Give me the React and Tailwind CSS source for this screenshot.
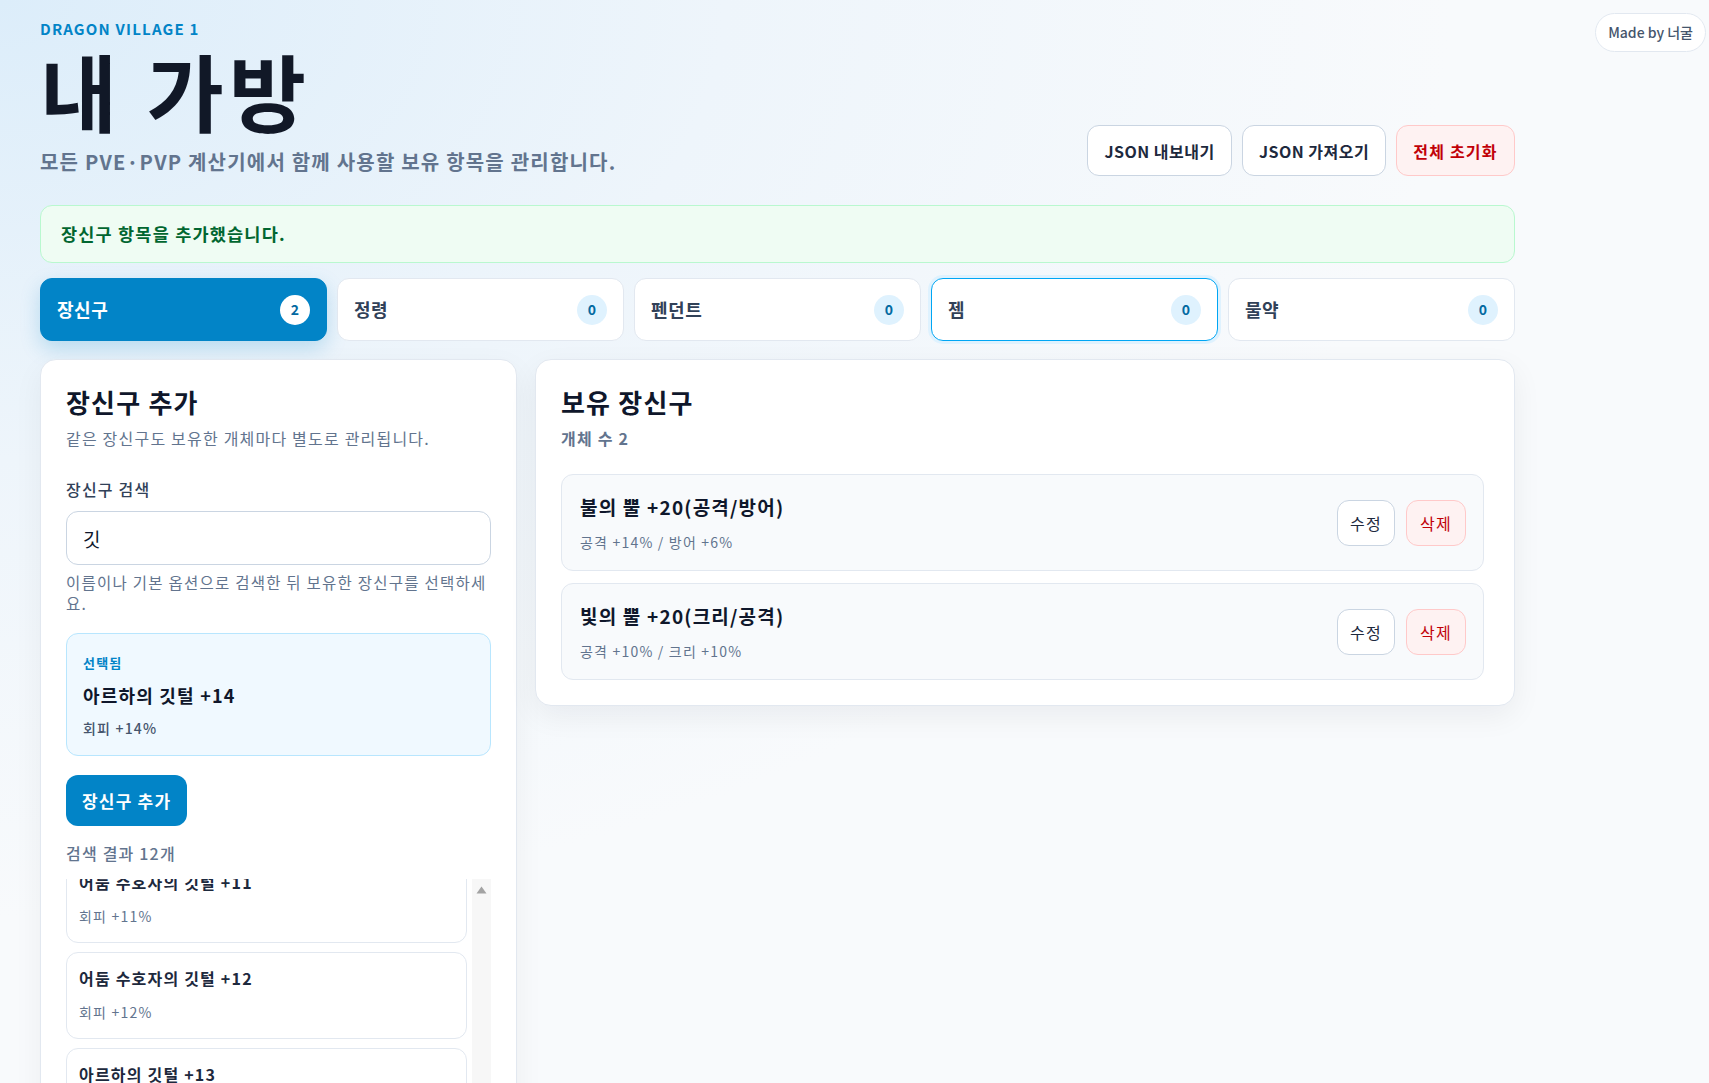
import React, { useEffect, useRef } from 'react';

const tabs = [
  { label: '장신구', count: 2, active: true },
  { label: '정령', count: 0 },
  { label: '펜던트', count: 0 },
  { label: '젬', count: 0, focused: true },
  { label: '물약', count: 0 },
];

const owned = [
  { name: '불의 뿔 +20(공격/방어)', stats: '공격 +14% / 방어 +6%' },
  { name: '빛의 뿔 +20(크리/공격)', stats: '공격 +10% / 크리 +10%' },
];

const results = [
  { name: '어둠 수호자의 깃털 +11', stats: '회피 +11%' },
  { name: '어둠 수호자의 깃털 +12', stats: '회피 +12%' },
  { name: '아르하의 깃털 +13', stats: '회피 +13%' },
  { name: '아르하의 깃털 +14', stats: '회피 +14%' },
  { name: '아르하의 깃털 +15', stats: '회피 +15%' },
  { name: '바람의 깃털 +10', stats: '회피 +10%' },
  { name: '바람의 깃털 +11', stats: '회피 +11%' },
  { name: '바람의 깃털 +12', stats: '회피 +12%' },
  { name: '불사조의 깃털 +13', stats: '회피 +13%' },
  { name: '불사조의 깃털 +14', stats: '회피 +14%' },
  { name: '불사조의 깃털 +15', stats: '회피 +15%' },
  { name: '불사조의 깃털 +16', stats: '회피 +16%' },
];

const App = () => {
  const listRef = useRef(null);

  useEffect(() => {
    // the list in the screenshot is scrolled slightly
    if (listRef.current) listRef.current.scrollTop = 23;
  }, []);

  return (
    <div className="relative h-screen overflow-hidden bg-[#f8fafc] bg-[radial-gradient(ellipse_at_top_left,#dcedfa_0%,#eef5fb_30%,#f8fafc_60%)] font-['Noto_Sans_CJK_KR','Noto_Sans',sans-serif] tracking-[0.075em] text-slate-900">
      {/* Made by badge */}
      <div className="fixed top-[13px] right-[3px] flex h-[39px] items-center rounded-full border border-slate-200 bg-white px-3 text-[14px] font-medium tracking-normal text-slate-600">
        Made by 너굴
      </div>

      <div className="ml-[40px] w-[1475px] pt-[18px]">
        {/* Header */}
        <div className="flex items-end justify-between">
          <div>
            <div className="text-[15px] leading-[22px] font-bold tracking-[0.08em] text-[#0284c7]">DRAGON VILLAGE 1</div>
            <h1 className="mt-[8px] text-[84px] leading-none font-bold tracking-[0.06em] text-[#111827]">내 가방</h1>
            <p className="mt-[16px] text-[20px] leading-[28px] font-semibold text-slate-500">
              모든 PVE·PVP 계산기에서 함께 사용할 보유 항목을 관리합니다.
            </p>
          </div>
          <div className="flex gap-[10px]">
            <button className="h-[51px] w-[145px] rounded-xl border border-slate-300 bg-white text-[16px] font-semibold tracking-[0.03em] text-slate-800">
              JSON 내보내기
            </button>
            <button className="h-[51px] w-[144px] rounded-xl border border-slate-300 bg-white text-[16px] font-semibold tracking-[0.03em] text-slate-800">
              JSON 가져오기
            </button>
            <button className="h-[51px] w-[119px] rounded-xl border border-red-200 bg-red-50 text-[16px] font-semibold text-red-700">
              전체 초기화
            </button>
          </div>
        </div>

        {/* Alert */}
        <div className="mt-[29px] rounded-xl border border-green-200 bg-[#effcf3] px-[20px] py-4 text-[17.5px] leading-[24px] font-semibold text-green-800">
          장신구 항목을 추가했습니다.
        </div>

        {/* Tabs */}
        <div className="mt-[15px] grid grid-cols-5 gap-[10px]">
          {tabs.map((tab) => (
            <button
              key={tab.label}
              className={
                tab.active
                  ? 'flex h-[63px] items-center justify-between rounded-xl border border-[#0284c7] bg-[#0284c7] px-4 text-white shadow-[0_8px_20px_rgba(2,132,199,0.22)]'
                  : tab.focused
                  ? 'flex h-[63px] items-center justify-between rounded-xl border border-sky-500 bg-white px-4 text-slate-700 ring-[3px] ring-sky-100'
                  : 'flex h-[63px] items-center justify-between rounded-xl border border-slate-200 bg-white px-4 text-slate-700'
              }
            >
              <span className="text-[18px] font-bold tracking-[0.03em]">{tab.label}</span>
              <span
                className={
                  tab.active
                    ? 'flex h-[30px] w-[30px] items-center justify-center rounded-full bg-white text-[14px] font-bold tracking-normal text-[#0369a1]'
                    : 'flex h-[30px] w-[30px] items-center justify-center rounded-full bg-sky-100 text-[14px] font-bold tracking-normal text-[#0369a1]'
                }
              >
                {tab.count}
              </span>
            </button>
          ))}
        </div>

        {/* Panels */}
        <div className="mt-[18px] grid grid-cols-[477px_1fr] items-start gap-[18px]">
          {/* Add panel */}
          <div className="rounded-2xl border border-slate-200 bg-white px-[25px] pt-[25px] pb-6 shadow-[0_10px_30px_rgba(15,23,42,0.05)]">
            <h2 className="text-[26px] leading-[34px] font-bold">장신구 추가</h2>
            <p className="mt-[8px] text-[16px] leading-[22px] text-slate-500">같은 장신구도 보유한 개체마다 별도로 관리됩니다.</p>

            <div className="mt-[29px] text-[16px] leading-[22px] font-medium text-slate-700">장신구 검색</div>
            <input
              defaultValue="깃"
              className="mt-[11px] h-[54px] w-full rounded-xl border border-slate-300 bg-white px-4 text-[19px] text-slate-900 outline-none"
            />
            <p className="mt-[7px] text-[15.5px] leading-[21px] tracking-[0.08em] text-slate-500">
              이름이나 기본 옵션으로 검색한 뒤 보유한 장신구를 선택하세요.
            </p>

            <div className="mt-[19px] rounded-xl border border-sky-200 bg-[#f0f9ff] px-4 pt-5 pb-[17px]">
              <div className="text-[13px] leading-[18px] font-semibold text-[#0284c7]">선택됨</div>
              <div className="mt-[10px] text-[18px] leading-[26px] font-bold text-slate-900">아르하의 깃털 +14</div>
              <div className="mt-[10px] text-[14px] leading-[20px] font-medium text-slate-600">회피 +14%</div>
            </div>

            <button className="mt-[19px] h-[51px] rounded-xl bg-[#0284c7] px-4 text-[17px] font-semibold text-white">
              장신구 추가
            </button>

            <div className="mt-[16px] text-[16px] leading-[22px] font-medium text-slate-500">검색 결과 12개</div>

            <div className="mt-[15px] flex gap-[5px]">
              <div
                ref={listRef}
                className="flex max-h-[420px] w-[402px] flex-col gap-[9px] overflow-y-auto [scrollbar-width:none]"
              >
                {results.map((item, i) => (
                  <div key={i} className="shrink-0 rounded-xl border border-slate-200 bg-white px-[12px] pt-[14px] pb-4">
                    <div className="text-[16px] leading-[22px] font-bold text-slate-800">{item.name}</div>
                    <div className="mt-[13px] text-[14px] leading-[20px] text-slate-500">{item.stats}</div>
                  </div>
                ))}
              </div>
              {/* scrollbar track */}
              <div className="flex w-[19px] shrink-0 justify-center bg-[#f7f7f7] pt-[7px]">
                <svg width="11" height="8" viewBox="0 0 11 8">
                  <polygon points="5.5,0.5 10.5,7.5 0.5,7.5" fill="#a3a3a3" />
                </svg>
              </div>
            </div>
          </div>

          {/* Owned panel */}
          <div className="rounded-2xl border border-slate-200 bg-white pt-[25px] pr-[30px] pb-[25px] pl-[25px] shadow-[0_10px_30px_rgba(15,23,42,0.06)]">
            <h2 className="text-[26px] leading-[34px] font-bold">보유 장신구</h2>
            <p className="mt-[8px] text-[16px] leading-[22px] font-semibold text-slate-500">개체 수 2</p>

            <div className="mt-[25px] flex flex-col gap-[12px]">
              {owned.map((item) => (
                <div key={item.name} className="flex h-[97px] items-center justify-between rounded-xl border border-slate-200 bg-slate-50 pr-[17px] pl-[18px]">
                  <div>
                    <div className="text-[19px] leading-[26px] font-semibold text-slate-900">{item.name}</div>
                    <div className="mt-[12px] text-[14px] leading-[20px] text-slate-500">{item.stats}</div>
                  </div>
                  <div className="flex gap-[11px]">
                    <button className="h-[46px] w-[58px] rounded-xl border border-slate-300 bg-white text-[16px] text-slate-800">
                      수정
                    </button>
                    <button className="h-[46px] w-[60px] rounded-xl border border-red-200 bg-red-50 text-[16px] text-red-700">
                      삭제
                    </button>
                  </div>
                </div>
              ))}
            </div>
          </div>
        </div>
      </div>
    </div>
  );
};

export default App;
